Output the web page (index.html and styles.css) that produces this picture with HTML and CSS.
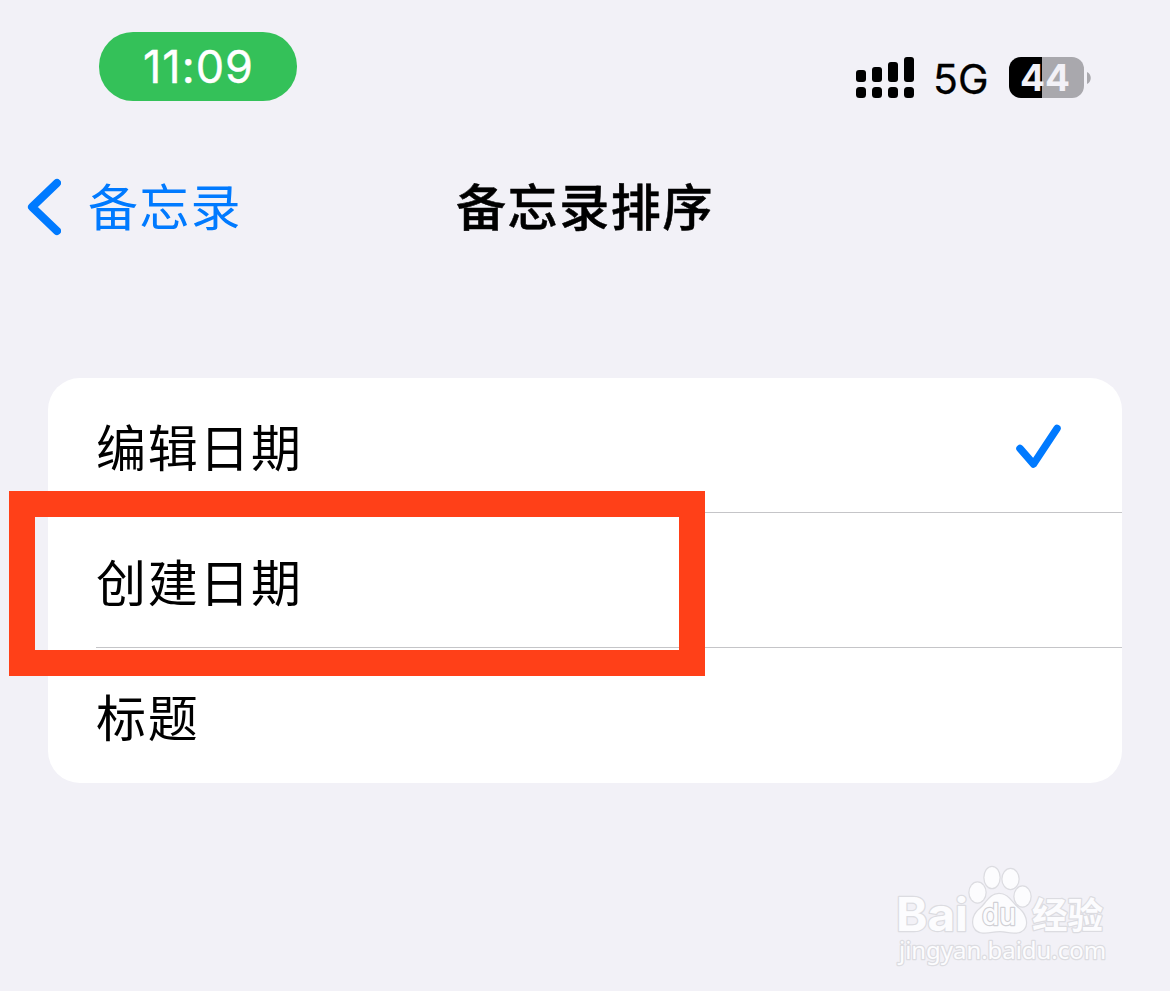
FILE: index.html
```html
<!DOCTYPE html>
<html lang="zh-CN">

<head>
    <meta charset="UTF-8">
    <meta name="viewport" content="width=device-width, initial-scale=1.0">
    <title>备忘录排序</title>
    <link rel="stylesheet" href="styles.css">
</head>

<body>
    <header class="status-bar">
        <div class="time"><span>11:09</span></div>
        <div class="status">
            <svg class="signal" width="58" height="41" viewBox="0 0 58 41">
                <rect x="0" y="13" width="10" height="12" rx="3" />
                <rect x="16" y="10" width="10" height="15" rx="3" />
                <rect x="32" y="5" width="10" height="20" rx="3" />
                <rect x="48" y="0" width="10" height="25" rx="3" />
                <rect x="0" y="30" width="10" height="11" rx="3.5" />
                <rect x="16" y="30" width="10" height="11" rx="3.5" />
                <rect x="32" y="30" width="10" height="11" rx="3.5" />
                <rect x="48" y="30" width="10" height="11" rx="3.5" />
            </svg>
            <span class="network">5G</span>
            <div class="battery"><span>44</span></div>
            <svg class="battery-cap" width="4" height="12" viewBox="0 0 4 12">
                <path d="M0 0C5 2 5 10 0 12Z" />
            </svg>
        </div>
    </header>

    <nav class="nav">
        <a class="back">
            <svg width="34" height="58" viewBox="0 0 34 58">
                <path d="M30 5L5 29L30 53" />
            </svg>
            <span>备忘录</span>
        </a>
        <h1>备忘录排序</h1>
    </nav>

    <main class="list">
        <div class="row">
            <span>编辑日期</span>
            <svg class="check" width="46" height="45" viewBox="0 0 46 45">
                <path d="M4 25.500L17.500 41L41 5.500" />
            </svg>
        </div>
        <div class="row"><span>创建日期</span></div>
        <div class="row"><span>标题</span></div>
        <div class="highlight"></div>
    </main>

    <footer class="watermark">
        <svg class="logo" width="220" height="120" viewBox="0 0 220 120">
            <text class="bai" x="5" y="70" textLength="72" lengthAdjust="spacingAndGlyphs">Bai</text>
            <ellipse cx="86.500" cy="31.500" rx="8" ry="10" />
            <ellipse cx="101" cy="16.500" rx="7.500" ry="10.500" />
            <ellipse cx="119.500" cy="18" rx="8" ry="10" />
            <ellipse cx="131.500" cy="35.500" rx="8" ry="10" />
            <path d="M108 33C117 33 120 41 127 47C137 55 139 70 125 71.500C118 72 115 70 109 70C102 70 98 72 92 71.500C79 70 80 55 89 48C96 42 99 33 108 33Z" />
            <text class="du" x="91" y="64" textLength="34" lengthAdjust="spacingAndGlyphs">du</text>
            <text class="jingyan" x="141" y="68" textLength="71" lengthAdjust="spacingAndGlyphs">经验</text>
            <text class="site" x="8" y="98" textLength="207" lengthAdjust="spacingAndGlyphs">jingyan.baidu.com</text>
        </svg>
    </footer>
</body>

</html>
```

FILE: styles.css
```css
* {
    margin: 0;
    padding: 0;
    box-sizing: border-box;
}

body {
    height: 991px;
    display: flex;
    flex-direction: column;
    overflow: hidden;
    background-color: #f2f1f7;
    color: #000;
    font-family: Inter, "Noto Sans CJK SC", sans-serif;
}

.status-bar {
    height: 150px;
    display: flex;
    justify-content: space-between;
    align-items: flex-start;
    padding: 32px 79px 0 99px;
}

.time {
    width: 198px;
    height: 69px;
    border-radius: 34px;
    background-color: #34c159;
    color: #fff;
    display: flex;
    justify-content: center;
    align-items: center;
    font-size: 45px;
    font-weight: 400;
    letter-spacing: 1px;
    padding-left: 1px;
    -webkit-text-stroke: 0.4px #fff;
}

.status {
    display: flex;
    align-items: center;
    height: 41px;
    margin-top: 25px;
}

.network {
    width: 56px;
    margin-left: 19px;
    margin-right: 20px;
    padding-top: 3px;
    font-size: 41px;
    font-weight: 400;
    letter-spacing: 0.2px;
    -webkit-text-stroke: 0.3px #000;
}

.battery {
    width: 75px;
    height: 41px;
    border-radius: 12px;
    background: linear-gradient(to right, #000 33px, #a9a8ad 33px);
    color: #f2f1f7;
    display: flex;
    justify-content: center;
    align-items: center;
    padding-right: 3px;
    font-size: 37px;
    font-weight: 700;
}

.battery-cap {
    margin-left: 3px;
    fill: #a9a8ad;
}

.nav {
    height: 114px;
    display: grid;
    grid-template-columns: 1fr auto 1fr;
    align-items: center;
    padding-left: 27px;
    padding-right: 27px;
}

.back {
    display: flex;
    align-items: center;
    gap: 27px;
    color: #007aff;
    font-size: 50px;
    letter-spacing: 1.2px;
}

.back span,
h1 {
    padding-bottom: 7px;
}

.back svg,
.check {
    fill: none;
    stroke: #007aff;
    stroke-width: 8;
    stroke-linecap: round;
    stroke-linejoin: round;
}

.check {
    stroke-width: 7.5;
}

h1 {
    font-size: 50px;
    font-weight: 500;
    letter-spacing: 1.6px;
    -webkit-text-stroke: 0.5px #000;
}

.list {
    position: relative;
    margin: 114px 48px 0;
    border-radius: 32px;
    background-color: #fff;
}

.row {
    height: 135px;
    display: flex;
    justify-content: space-between;
    align-items: center;
    margin-left: 48px;
    padding-right: 60px;
    border-bottom: 1px solid #c5c5c8;
    font-size: 50px;
    letter-spacing: 1.7px;
}

.row:nth-child(3) {
    border-bottom: none;
    padding-bottom: 1px;
}

/* red frame round the second option */
.highlight {
    position: absolute;
    left: -39px;
    top: 113px;
    width: 696px;
    height: 185px;
    border: 26px solid #ff4018;
}

.watermark {
    display: flex;
    justify-content: flex-end;
    margin-top: 78px;
    padding-right: 59px;
}

.logo {
    overflow: visible;
    fill: #fcfcfe;
    stroke: #dcdce1;
    stroke-width: 2.5px;
    paint-order: stroke;
    stroke-linejoin: round;
}

.bai {
    font: 700 46px Inter, sans-serif;
}

.du {
    font: 500 30px Inter, sans-serif;
    stroke: #d0d0d5;
}

.jingyan {
    font: 700 36px "Noto Sans CJK SC", sans-serif;
}

.site {
    font: 400 24px "Noto Sans", sans-serif;
}
```
